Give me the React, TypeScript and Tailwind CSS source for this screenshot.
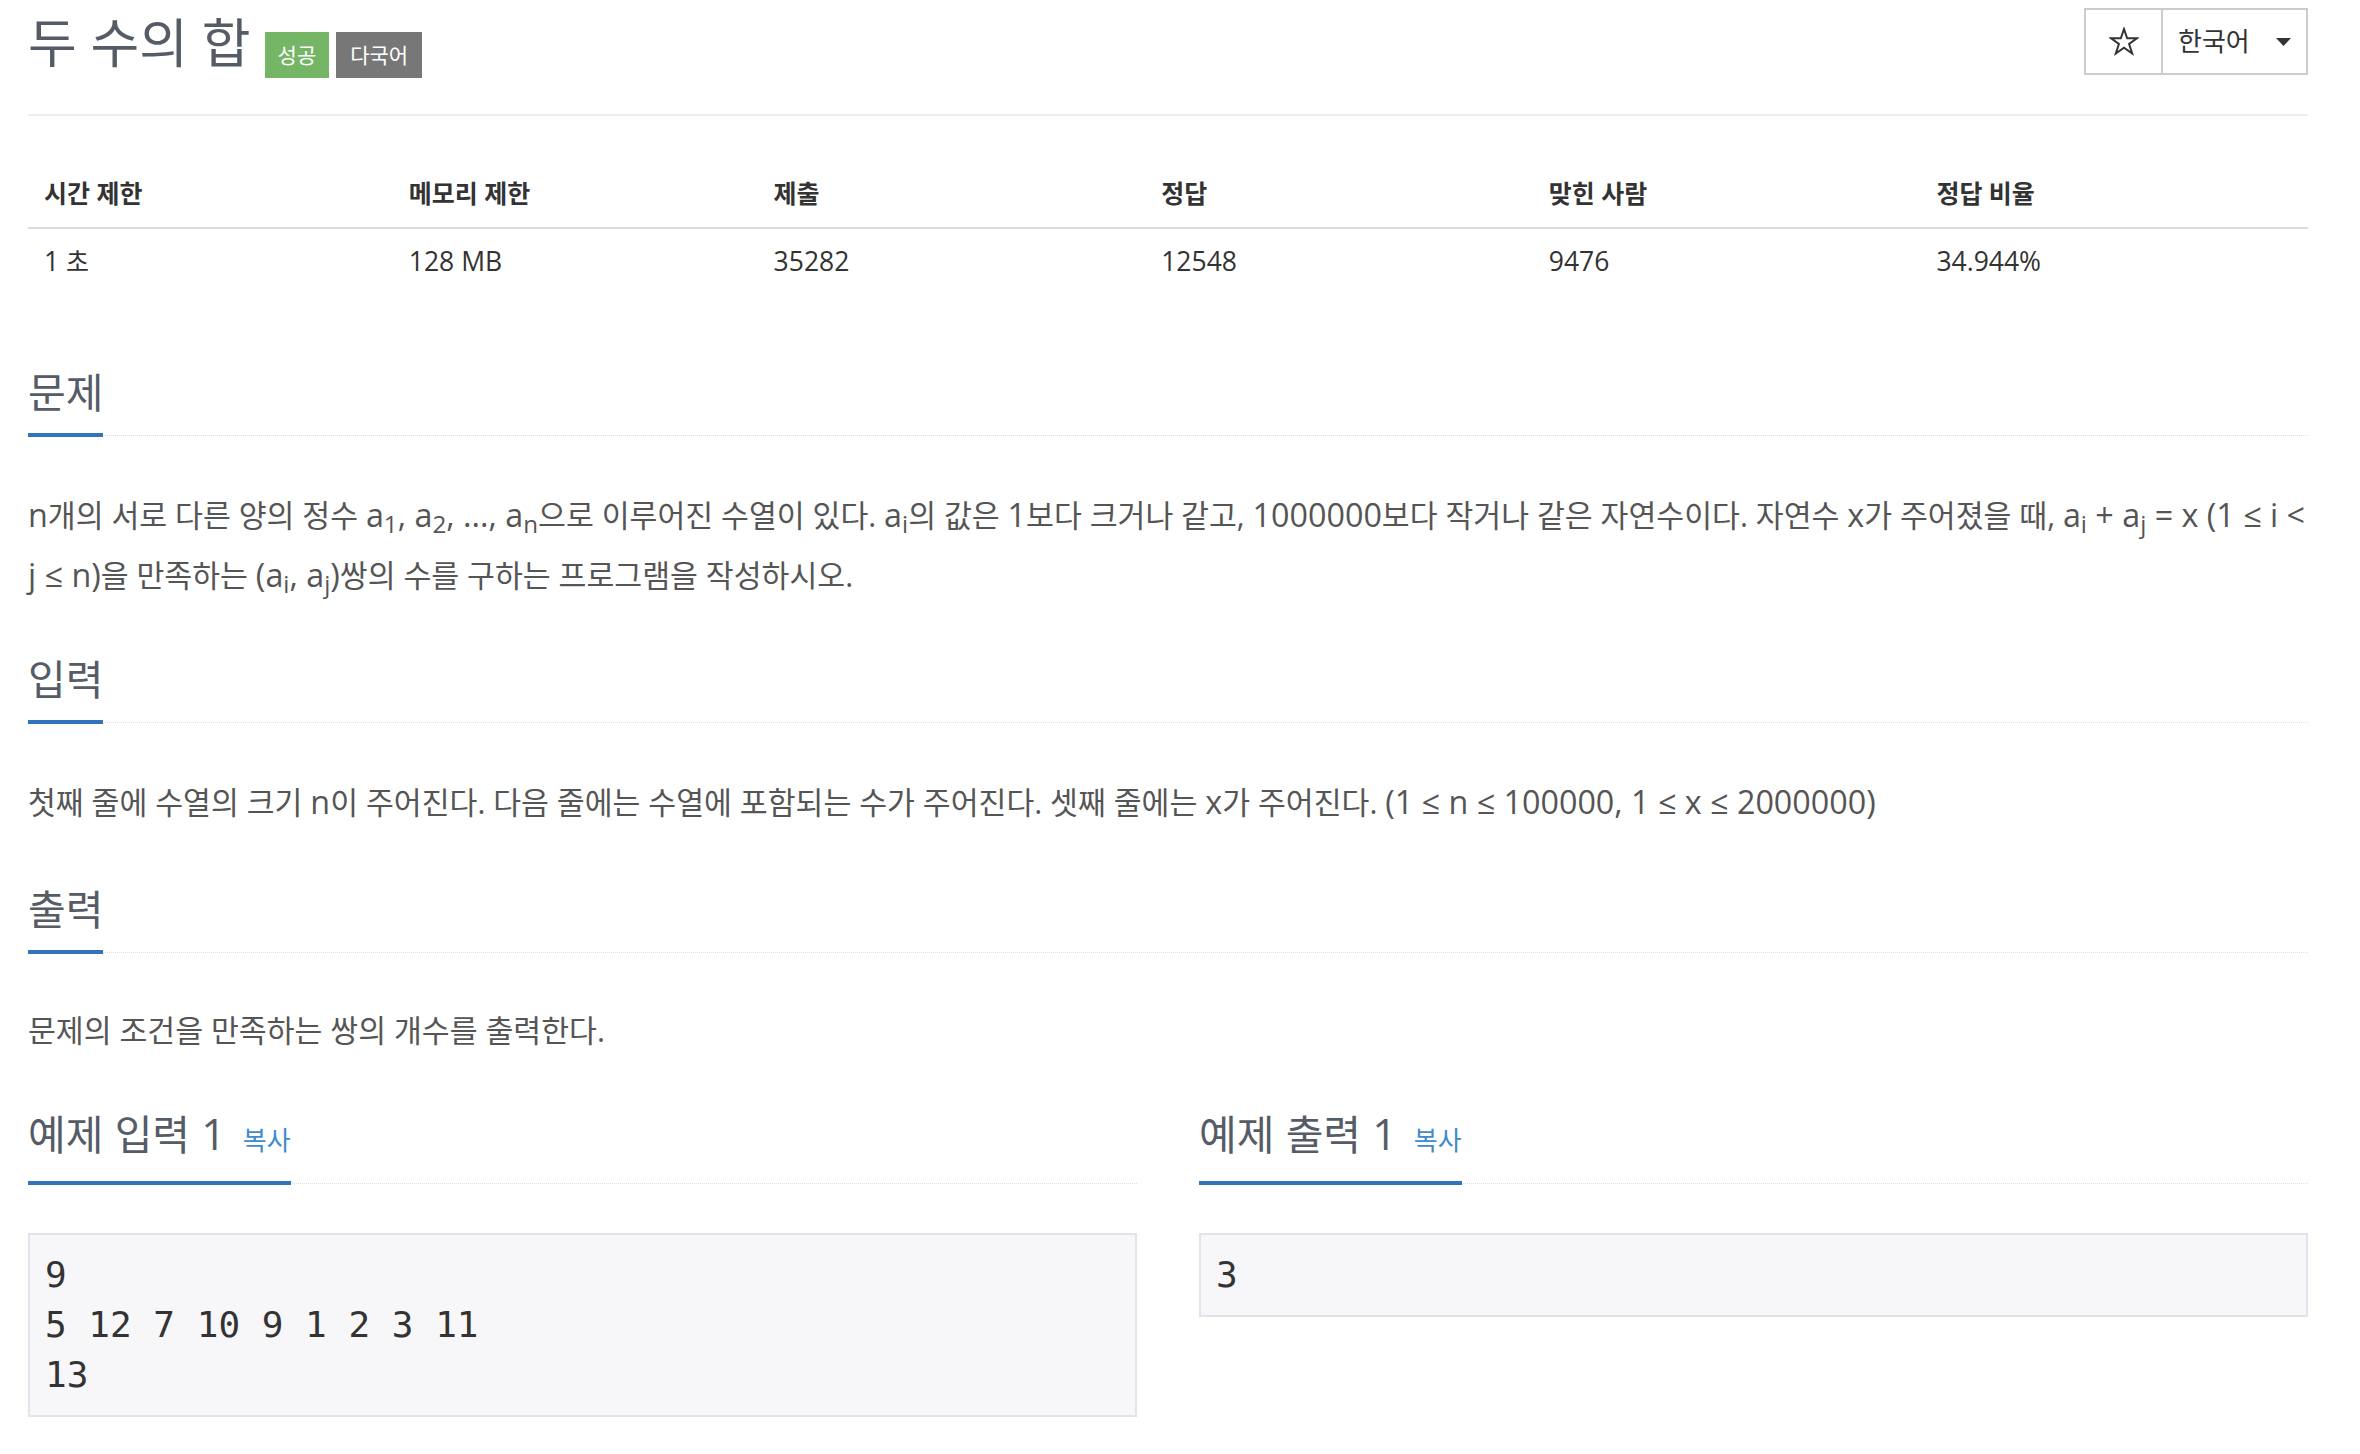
import React from 'react';

// Latin runs are set a size up from the Hangul around them
const L = ({ children }: { children: React.ReactNode }) => (
  <span className="text-[32.3px]">{children}</span>
);

const Headline = ({ children }: { children: React.ReactNode }) => (
  <div className="flex border-b border-dotted border-[#dcdfe6]">
    <h2 className="-mb-[2px] border-b-4 border-[#3174bd] pb-[19px] text-[41px] font-normal leading-[44px] text-[#555c66]">
      {children}
    </h2>
  </div>
);

const Sample = ({ lines }: { lines: string[] }) => (
  <pre className="mt-[49px] border-2 border-[#e3e3e9] bg-[#f7f7f9] px-[15px] py-[15px] font-['DejaVu_Sans_Mono',monospace] text-[36px] leading-[50px] text-[#333]">
    {lines.join('\n')}
  </pre>
);

const StarIcon = () => (
  <svg width="30" height="30" viewBox="0 0 30 30" fill="none">
    <polygon
      points="15,2 18.15,11.2 28,11.2 20.1,17 23.2,26.5 15,20.8 6.8,26.5 9.9,17 2,11.2 11.85,11.2"
      stroke="#333"
      strokeWidth="2"
      strokeLinejoin="miter"
    />
  </svg>
);

const TitleBar = () => (
  <div className="flex h-[116px] items-start justify-between border-b-2 border-[#eee]">
    <div className="flex items-start">
      <h1 className="mt-[18px] text-[53px] font-normal leading-[50px] text-[#555c66]">두 수의 합</h1>
      <span className="ml-[14px] mt-[32px] h-[46px] bg-[#74b566] px-[13px] text-[21px] leading-[46px] text-white">성공</span>
      <span className="ml-[7px] mt-[32px] h-[46px] bg-[#777] px-[14px] text-[21px] leading-[46px] text-white">다국어</span>
    </div>
    <div className="mt-[8px] flex h-[67px] border-2 border-[#ccc]">
      <div className="flex w-[77px] items-center justify-center border-r-2 border-[#ccc]">
        <StarIcon />
      </div>
      <div className="flex w-[143px] items-center justify-between pl-[15px] pr-[15px]">
        <span className="text-[26px] text-[#333]">한국어</span>
        <svg width="15" height="8" viewBox="0 0 15 8">
          <polygon points="0,0 15,0 7.5,8" fill="#333" />
        </svg>
      </div>
    </div>
  </div>
);

const InfoTable = () => {
  const heads = ['시간 제한', '메모리 제한', '제출', '정답', '맞힌 사람', '정답 비율'];
  const widths = ['w-[16%]', 'w-[16%]', 'w-[17%]', 'w-[17%]', 'w-[17%]', 'w-[17%]'];
  const values: React.ReactNode[] = [
    <>1 <span className="text-[25px]">초</span></>,
    '128 MB',
    '35282',
    '12548',
    '9476',
    '34.944%',
  ];
  return (
    <table className="mt-[43px] w-full table-fixed border-collapse text-[#333]">
      <thead>
        <tr>
          {heads.map((h, i) => (
            <th
              key={h}
              className={`${widths[i]} border-b-2 border-[#ddd] py-[17px] pl-[16px] text-left text-[25px] font-bold leading-[34px]`}
            >
              {h}
            </th>
          ))}
        </tr>
      </thead>
      <tbody>
        <tr>
          {values.map((v, i) => (
            <td key={i} className="pb-[21px] pl-[16px] pt-[15px] text-[26.5px] leading-[34px]">
              {v}
            </td>
          ))}
        </tr>
      </tbody>
    </table>
  );
};

const SampleHeading = ({ label }: { label: string }) => (
  <Headline>
    예제<span className="text-[43px]"> </span>
    {label}
    <span className="text-[43px]"> 1</span>
    <button className="ml-[17px] text-[26px] text-[#428bca]">복사</button>
  </Headline>
);

export default function App() {
  return (
    <div className="min-h-screen bg-white pl-[28px] pr-[52px] font-['Open_Sans','Noto_Sans_CJK_KR',sans-serif] text-[#555]">
      <TitleBar />
      <InfoTable />

      <section className="mt-[71px]">
        <Headline>문제</Headline>
        <p className="mt-[49px] text-[30.3px] leading-[58px]">
          <L>n</L>개의 서로 다른 양의 정수 <L>a<sub>1</sub>, a<sub>2</sub>, ..., a<sub>n</sub></L>으로 이루어진 수열이 있다.{' '}
          <L>a<sub>i</sub></L>의 값은 <L>1</L>보다 크거나 같고, <L>1000000</L>보다 작거나 같은 자연수이다. 자연수{' '}
          <L>x</L>가 주어졌을 때, <L>a<sub>i</sub> + a<sub>j</sub> = x (1 ≤ i &lt; j ≤ n)</L>을 만족하는{' '}
          <L>(a<sub>i</sub>, a<sub>j</sub>)</L>쌍의 수를 구하는 프로그램을 작성하시오.
        </p>
      </section>

      <section className="mt-[52px]">
        <Headline>입력</Headline>
        <p className="mt-[49px] text-[30.3px] leading-[58px]">
          첫째 줄에 수열의 크기 <L>n</L>이 주어진다. 다음 줄에는 수열에 포함되는 수가 주어진다. 셋째 줄에는 <L>x</L>가
          주어진다. <L>(1 ≤ n ≤ 100000, 1 ≤ x ≤ 2000000)</L>
        </p>
      </section>

      <section className="mt-[55px]">
        <Headline>출력</Headline>
        <p className="mt-[49px] text-[30.3px] leading-[58px]">문제의 조건을 만족하는 쌍의 개수를 출력한다.</p>
      </section>

      <div className="mt-[52px] grid grid-cols-2 gap-x-[62px]">
        <section>
          <SampleHeading label="입력" />
          <Sample lines={['9', '5 12 7 10 9 1 2 3 11', '13']} />
        </section>
        <section>
          <SampleHeading label="출력" />
          <Sample lines={['3']} />
        </section>
      </div>
    </div>
  );
}
